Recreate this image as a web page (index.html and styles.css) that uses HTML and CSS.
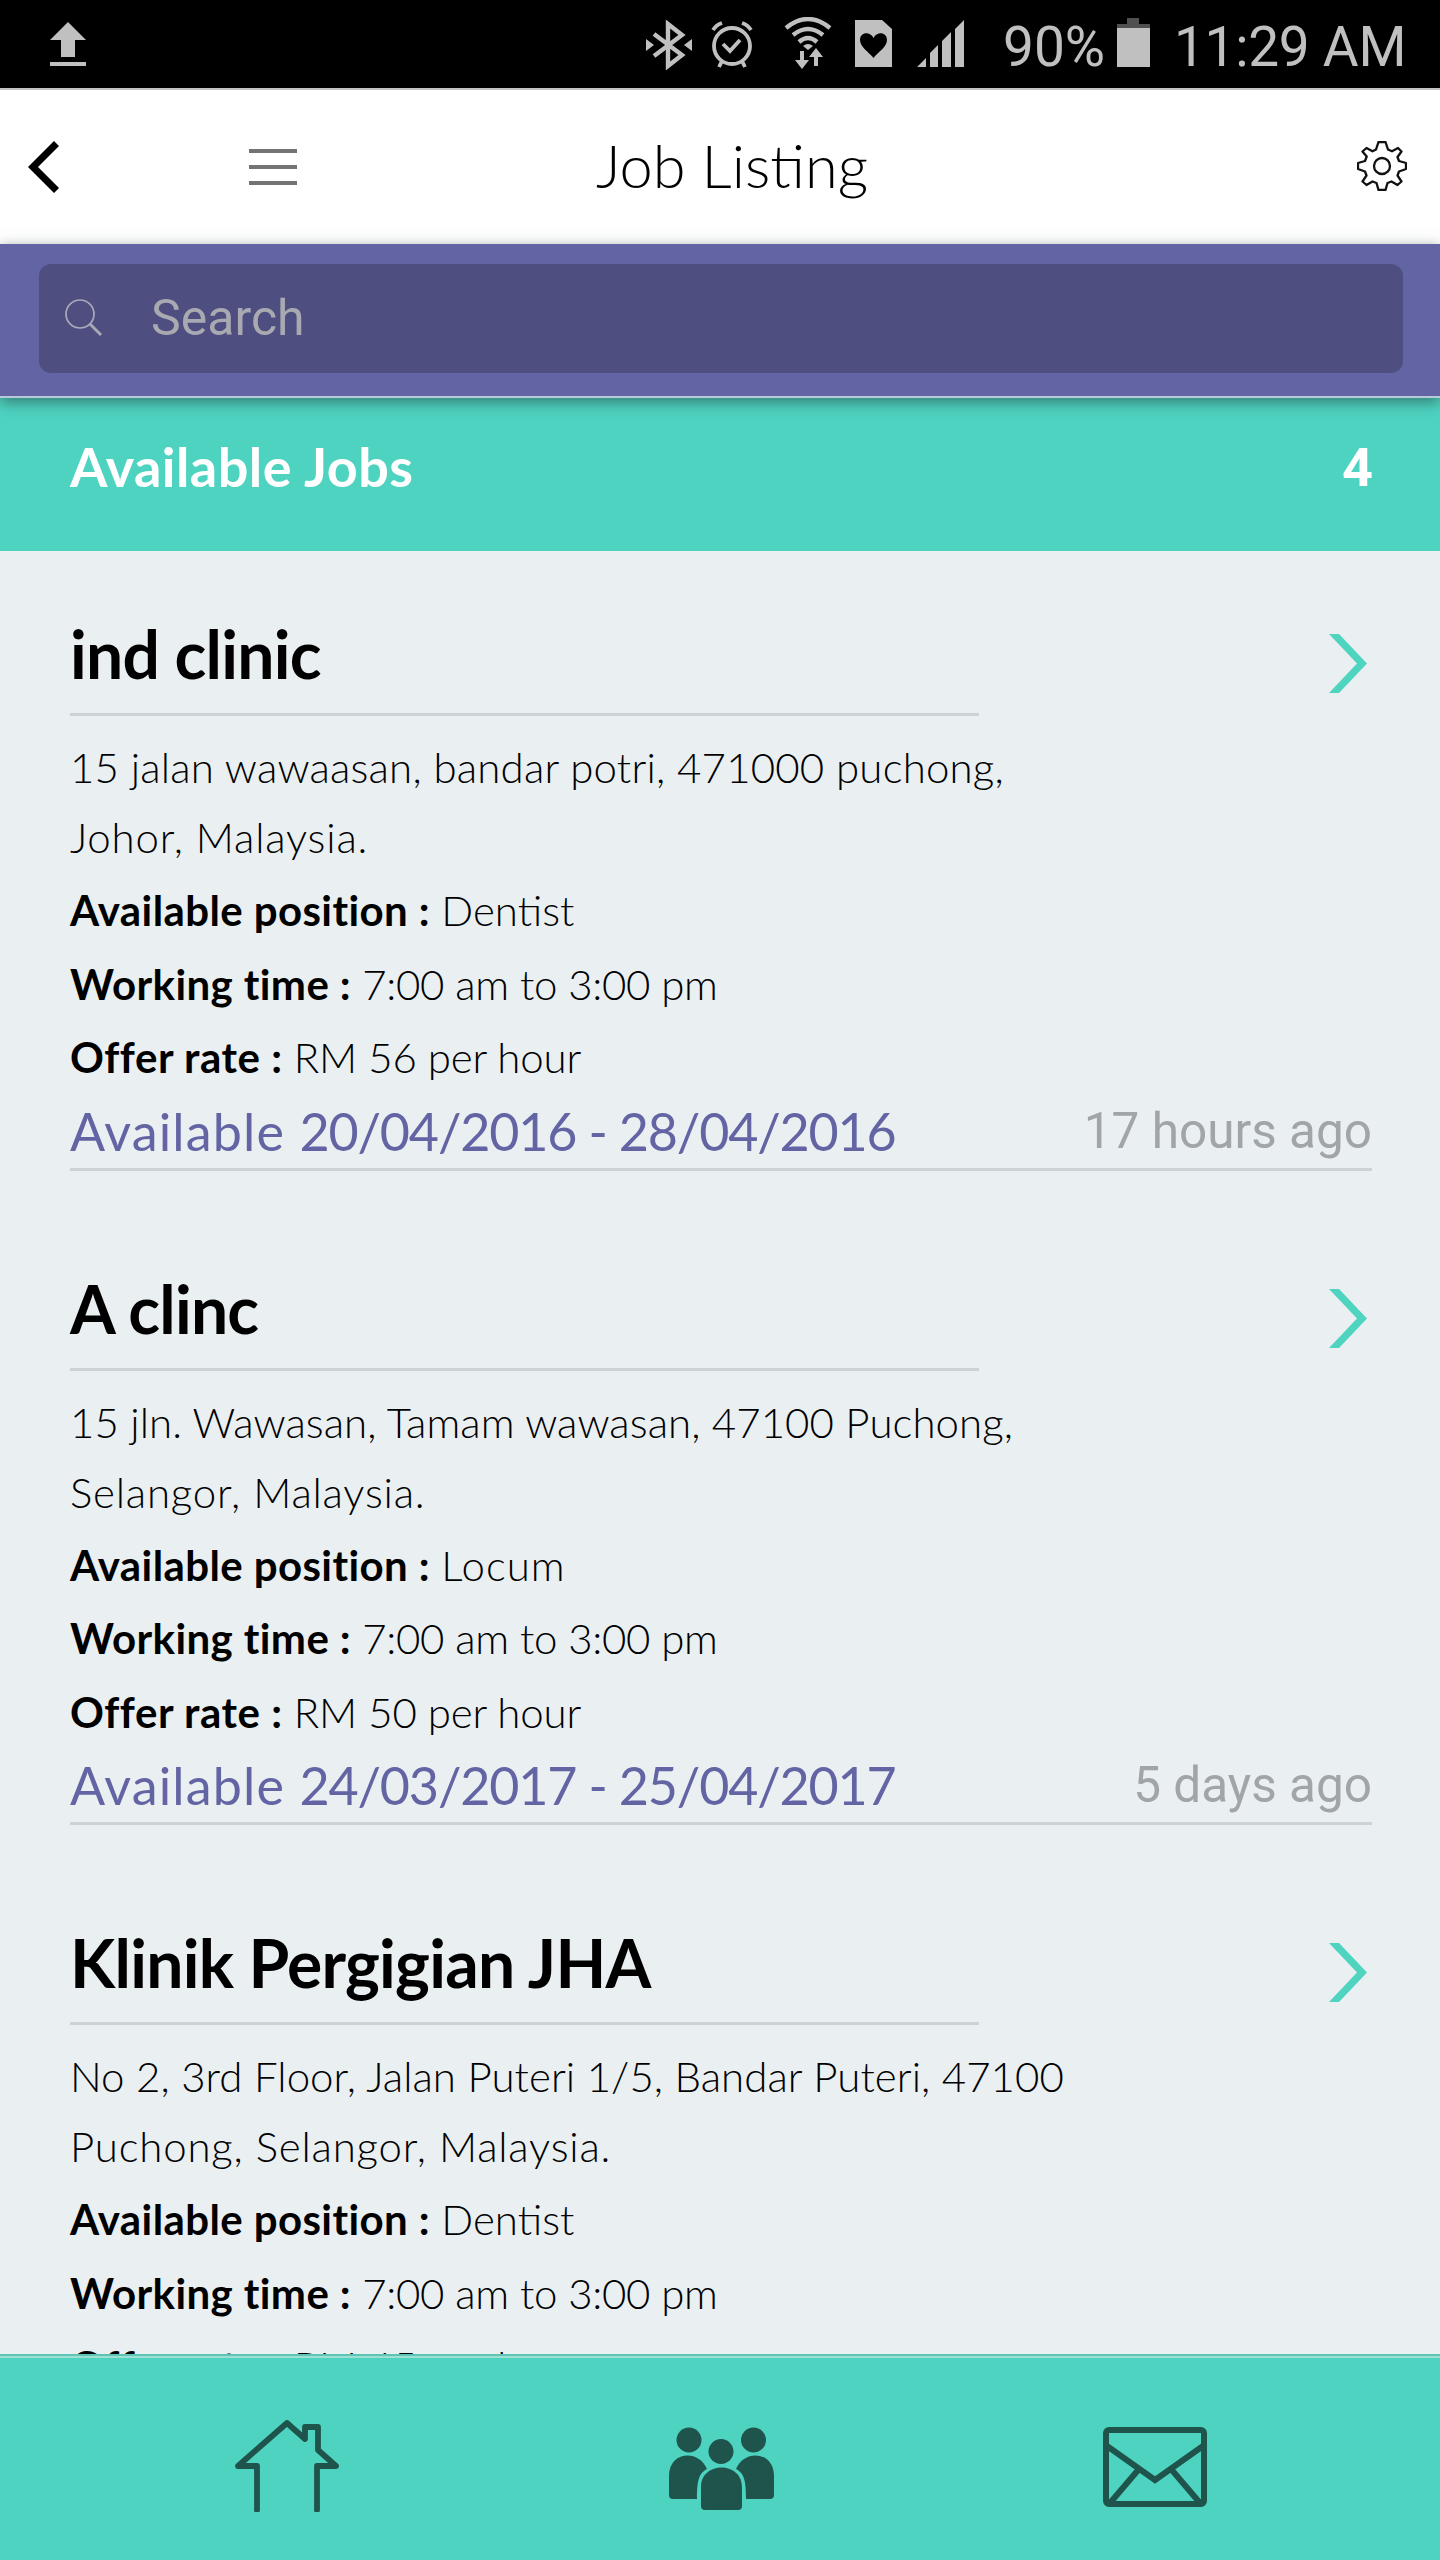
FILE: index.html
```html
<!DOCTYPE html>
<html lang="en">
<head>
    <meta charset="UTF-8">
    <meta name="viewport" content="width=device-width, initial-scale=1.0">
    <title>Job Listing</title>
    <link rel="stylesheet" href="styles.css">
</head>
<body>
    <!-- Status bar -->
    <div class="status-bar">
        <svg class="upload" width="36" height="44" viewBox="0 0 36 44"><path d="M18 0L36 18H25V35H11V18H0ZM0 40H36V44H0Z"/></svg>
        <div class="status-icons">
            <svg class="bluetooth" width="46" height="50" viewBox="0 0 46 50"><path d="M8 14L36 35L22 46V4L36 15L8 36" fill="none" stroke="#c0c0c0" stroke-width="4.4"/><path d="M0 19L8 25L0 31ZM46 19L38 25L46 31Z"/></svg>
            <svg class="alarm" width="42" height="48" viewBox="0 0 42 48"><g fill="none" stroke="#c0c0c0" stroke-width="3.8"><circle cx="21" cy="25" r="18"/><path d="M12 23L19 30L29 19M2 9Q5 4 11 2M40 9Q37 4 31 2M11 40L8 46M31 40L34 46"/></g></svg>
            <svg class="wifi" width="48" height="52" viewBox="0 0 48 52"><g fill="none" stroke="#c0c0c0" stroke-width="4.4"><path d="M2 11Q24 -7 46 11M9 18Q24 6 39 18M15 25Q24 17 33 25"/></g><path d="M19 29Q24 25 29 29L24 33ZM16 34H20V43H25L18 52L11 43H16ZM30 49V40H25L32 31L39 40H34V49Z"/></svg>
            <svg class="sim" width="37" height="47" viewBox="0 0 37 47"><path fill-rule="evenodd" d="M0 0H27L37 9V47H0ZM18.500 38C14 32 5 27 5 20C5 12 15 11 18.500 18C22 11 32 12 32 20C32 27 23 32 18.500 38Z"/></svg>
            <svg class="signal" width="48" height="47" viewBox="0 0 48 47"><path d="M0 47L9 38V47ZM13 33L21 25V47H13ZM25 21L34 12V47H25ZM38 9L47 0V47H38Z"/></svg>
            <span class="percent">90%</span>
            <svg class="battery" width="33" height="49" viewBox="0 0 33 49"><path fill="#505050" d="M10 0H22V6H33V10H0V6H10Z"/><path d="M0 10H33V49H0Z"/></svg>
            <span class="clock">11:29 AM</span>
        </div>
    </div>

    <!-- Header -->
    <header>
        <svg class="back" width="32" height="52" viewBox="0 0 32 52"><path d="M26 0L31 5L10 26L31 47L26 52L0 26Z"/></svg>
        <div class="menu"><i></i><i></i><i></i></div>
        <h1>Job Listing</h1>
        <svg class="gear" width="50" height="50" viewBox="0 0 50 50"><path d="M21.500 1H28.500L31 8.500L35 10.300L41 7L44.500 10.500L40.500 16L42 20L49 22V28L42 30.500L40.500 34.500L44.500 40.500L40.500 44L34.500 40.500L30.500 42L28.500 49H21.500L19.500 42L15.500 40.500L9.500 44L5.500 40.500L9.500 34.500L8 30.500L1 28V22L8 20L9.700 15.500L5.500 10.500L9.500 7L15.500 10.300L19 8.500Z"/><circle cx="25" cy="25" r="8"/></svg>
    </header>

    <!-- Search -->
    <div class="search-bar">
        <div class="search-box">
            <svg width="37" height="37" viewBox="0 0 37 37"><circle cx="15" cy="15" r="14"/><path d="M25 25L36 36" stroke-width="2.800"/></svg>
            <span>Search</span>
        </div>
    </div>

    <div class="summary">
        <h2>Available Jobs</h2>
        <span>4</span>
    </div>

    <main>
        <section class="job">
            <div class="job-head">
                <h3>ind clinic</h3>
                <svg width="38" height="59" viewBox="0 0 38 59"><path d="M0 0H10L38 29.500L10 59H0L28 29.500Z"/></svg>
            </div>
            <p class="street">15 jalan wawaasan, bandar potri, 471000 puchong,</p>
            <p class="region">Johor, Malaysia.</p>
            <p><b class="position">Available position :</b> Dentist</p>
            <p class="time"><b>Working time :</b> 7:00 am to 3:00 pm</p>
            <p class="rate"><b>Offer rate :</b> RM 56 per hour</p>
            <div class="dates"><span>Available <em>20/04/2016 - 28/04/2016</em></span><small>17 hours ago</small></div>
        </section>

        <section class="job">
            <div class="job-head">
                <h3>A clinc</h3>
                <svg width="38" height="59" viewBox="0 0 38 59"><path d="M0 0H10L38 29.500L10 59H0L28 29.500Z"/></svg>
            </div>
            <p class="street snug">15 jln. Wawasan, Tamam wawasan, 47100 Puchong,</p>
            <p class="region">Selangor, Malaysia.</p>
            <p><b class="position">Available position :</b> <span class="wide">Locum</span></p>
            <p class="time"><b>Working time :</b> 7:00 am to 3:00 pm</p>
            <p class="rate"><b>Offer rate :</b> RM 50 per hour</p>
            <div class="dates"><span>Available <em>24/03/2017 - 25/04/2017</em></span><small>5 days ago</small></div>
        </section>

        <section class="job">
            <div class="job-head">
                <h3>Klinik Pergigian JHA</h3>
                <svg width="38" height="59" viewBox="0 0 38 59"><path d="M0 0H10L38 29.500L10 59H0L28 29.500Z"/></svg>
            </div>
            <p class="street snug">No 2, 3rd Floor, Jalan Puteri 1/5, Bandar Puteri, 47100</p>
            <p class="region">Puchong, Selangor, Malaysia.</p>
            <p><b class="position">Available position :</b> Dentist</p>
            <p class="time"><b>Working time :</b> 7:00 am to 3:00 pm</p>
            <p class="rate"><b>Offer rate :</b> RM 45 per hour</p>
        </section>
    </main>

    <!-- Bottom tabs -->
    <footer>
        <svg class="home" width="104" height="92" viewBox="0 0 104 92"><path d="M22 90V46H3L52 3L70 19V7H83V30L101 46H82V90"/></svg>
        <svg class="people" width="106" height="84" viewBox="0 0 106 84"><circle cx="20" cy="13" r="12.500"/><circle cx="84.500" cy="13" r="12.500"/><circle cx="52" cy="24.500" r="12.500"/><path d="M0 68V49C0 24 30 22 38 42C30 46 28 53 28 72H4Q0 72 0 68ZM105 68V49C105 24 75 22 67 42C75 46 77 53 77 72H101Q105 72 105 68ZM32 79V60C32 34 73 34 73 60V79Q73 83 69 83H36Q32 83 32 79Z"/></svg>
        <svg class="mail" width="104" height="80" viewBox="0 0 104 80"><rect x="3" y="3" width="98" height="74" rx="3"/><path d="M4 19L52 53L100 19M7 76L36 42M97 76L68 42"/></svg>
    </footer>
</body>
</html>
```
FILE: styles.css
```css
* {
    margin: 0;
    padding: 0;
    box-sizing: border-box;
}

body {
    width: 1440px;
    height: 2560px;
    display: flex;
    flex-direction: column;
    overflow: hidden;
    background-color: #eaeff2;
    color: #000;
    font-family: Lato, "Liberation Sans", sans-serif;
}

svg {
    display: block;
    flex: none;
}

/* Status bar */
.status-bar {
    height: 88px;
    flex: none;
    display: flex;
    justify-content: space-between;
    padding: 0 33px 0 50px;
    background-color: #000;
    color: #c0c0c0;
    fill: #c0c0c0;
    font-family: Roboto, sans-serif;
    font-size: 55px;
    line-height: 94px;
}

.status-icons {
    display: flex;
    white-space: nowrap;
}

.upload { margin-top: 22px; }
.bluetooth { margin: 20px 19px 0 0; }
.alarm { margin: 21px 31px 0 0; }
.wifi { margin: 17px 23px 0 0; }
.sim { margin: 20px 25px 0 0; }
.signal { margin: 20px 38px 0 0; }
.percent { width: 114px; }
.battery { margin: 18px 24px 0 0; }
.clock {
    width: 233px;
    letter-spacing: -0.3px;
}

/* Header */
header {
    height: 156px;
    flex: none;
    display: flex;
    padding: 0 33px 0 28px;
    background-color: #fff;
    border-top: 2px solid #c4c4c4;
}

.back { margin: 51px 189px 0 0; }

.menu {
    width: 48px;
    display: flex;
    flex-direction: column;
    gap: 12px;
    padding-top: 59px;
}

.menu i {
    height: 4px;
    background-color: #747474;
}

header h1 {
    flex: 1;
    padding-left: 299px;
    font-size: 59.5px;
    font-weight: 300;
    line-height: 150px;
}

.gear {
    margin-top: 51px;
    fill: none;
    stroke: #111;
    stroke-width: 2.3;
    stroke-linejoin: round;
}

/* Search */
.search-bar {
    position: relative;
    height: 154px;
    flex: none;
    padding: 20px 37px 0 39px;
    background-color: #6364a3;
    border-bottom: 2px solid #b5cbdc;
    box-shadow: 0 4px 14px rgba(30, 50, 50, 0.55);
}

.search-box {
    height: 109px;
    display: flex;
    padding-left: 26px;
    background-color: #4e4f80;
    border-radius: 12px;
    color: #a9a9b2;
    font-family: Roboto, sans-serif;
    font-size: 50px;
    line-height: 109px;
}

.search-box svg {
    margin: 35px 49px 0 0;
    fill: none;
    stroke: #a9a9b8;
    stroke-width: 1.7;
}

.summary {
    height: 153px;
    flex: none;
    display: flex;
    justify-content: space-between;
    padding: 0 67px 0 70px;
    background-color: #4ed3c1;
    color: #fff;
    line-height: 137px;
}

.summary h2 {
    font-size: 54px;
    font-weight: 700;
    letter-spacing: 0.45px;
}

.summary span {
    font-family: Roboto, sans-serif;
    font-size: 54px;
    font-weight: 700;
    line-height: 140px;
}

/* Job list */
main {
    height: 1803px;
    flex: none;
    overflow: hidden;
    padding: 0 68px 0 70px;
}

.job {
    height: 654.5px;
    padding-top: 62px;
}

.job-head {
    display: flex;
    justify-content: space-between;
    padding-right: 5px;
    margin-bottom: 16px;
}

.job-head svg {
    margin-top: 21px;
    fill: #4fd4bf;
}

.job h3 {
    width: 909px;
    height: 103px;
    border-bottom: 3px solid #cdd2d6;
    font-size: 66px;
    font-weight: 700;
    line-height: 81px;
    letter-spacing: -0.75px;
}

.job p {
    font-size: 42px;
    font-weight: 300;
    line-height: 73.5px;
    white-space: nowrap;
}

.job b {
    font-weight: 700;
    letter-spacing: 0.4px;
}

.job .street {
    line-height: 70px;
    letter-spacing: 0.2px;
}

.job .snug {
    letter-spacing: 0.05px;
}

.job .region {
    margin-bottom: 2px;
    line-height: 70px;
    letter-spacing: 0.8px;
}

.job .wide { letter-spacing: 1px; }
.job .time { letter-spacing: -0.3px; }
.job .rate { letter-spacing: -0.2px; }
.job .rate b { letter-spacing: 0.55px; }

.dates {
    display: flex;
    justify-content: space-between;
    height: 76px;
    border-bottom: 3px solid #cdd2d6;
    color: #6364a3;
    font-size: 52px;
    line-height: 73.5px;
    letter-spacing: 1.15px;
    white-space: nowrap;
}

.dates em {
    font-style: normal;
    letter-spacing: -1.15px;
}

.dates small {
    color: #a1a5a8;
    font-family: Roboto, sans-serif;
    font-size: 49.5px;
    line-height: 72px;
    letter-spacing: 0;
}

/* Bottom tabs */
footer {
    height: 206px;
    flex: none;
    display: flex;
    padding-left: 235px;
    background-color: #4ed3c1;
    border-top: 2px solid #5cc6b3;
    box-shadow: inset 0 2px #a0dfd6;
    fill: #1f544c;
}

.home {
    margin: 64px 330px 0 0;
    fill: none;
    stroke: #1f544c;
    stroke-width: 5.8;
    stroke-linecap: round;
    stroke-linejoin: round;
}

.people { margin: 71px 328px 0 0; }

.mail {
    margin-top: 71px;
    fill: none;
    stroke: #1f544c;
    stroke-width: 6;
}
```
